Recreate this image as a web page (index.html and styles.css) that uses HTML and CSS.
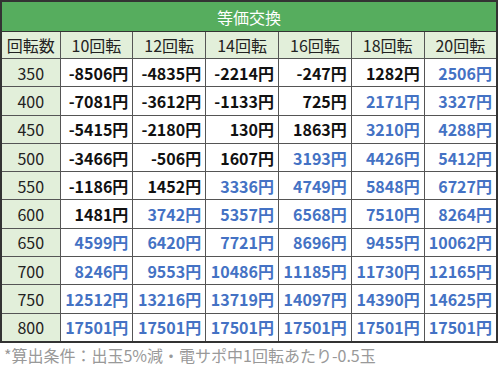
FILE: index.html
```html
<!DOCTYPE html>
<html lang="ja">
<head>
<meta charset="utf-8">
<link rel="stylesheet" href="styles.css">
</head>
<body>
<table class="tbl">
  <colgroup>
    <col class="c0"><col class="cn"><col class="cn"><col class="cn"><col class="cn"><col class="cn"><col class="cn">
  </colgroup>
  <tr class="title"><th colspan="7">等価交換</th></tr>
  <tr class="head"><th>回転数</th><th>10回転</th><th>12回転</th><th>14回転</th><th>16回転</th><th>18回転</th><th>20回転</th></tr>
  <tr><th>350</th><td>-8506円</td><td>-4835円</td><td>-2214円</td><td>-247円</td><td>1282円</td><td class="p">2506円</td></tr>
  <tr><th>400</th><td>-7081円</td><td>-3612円</td><td>-1133円</td><td>725円</td><td class="p">2171円</td><td class="p">3327円</td></tr>
  <tr><th>450</th><td>-5415円</td><td>-2180円</td><td>130円</td><td>1863円</td><td class="p">3210円</td><td class="p">4288円</td></tr>
  <tr><th>500</th><td>-3466円</td><td>-506円</td><td>1607円</td><td class="p">3193円</td><td class="p">4426円</td><td class="p">5412円</td></tr>
  <tr><th>550</th><td>-1186円</td><td>1452円</td><td class="p">3336円</td><td class="p">4749円</td><td class="p">5848円</td><td class="p">6727円</td></tr>
  <tr><th>600</th><td>1481円</td><td class="p">3742円</td><td class="p">5357円</td><td class="p">6568円</td><td class="p">7510円</td><td class="p">8264円</td></tr>
  <tr><th>650</th><td class="p">4599円</td><td class="p">6420円</td><td class="p">7721円</td><td class="p">8696円</td><td class="p">9455円</td><td class="p">10062円</td></tr>
  <tr><th>700</th><td class="p">8246円</td><td class="p">9553円</td><td class="p">10486円</td><td class="p">11185円</td><td class="p">11730円</td><td class="p">12165円</td></tr>
  <tr><th>750</th><td class="p">12512円</td><td class="p">13216円</td><td class="p">13719円</td><td class="p">14097円</td><td class="p">14390円</td><td class="p">14625円</td></tr>
  <tr><th>800</th><td class="p">17501円</td><td class="p">17501円</td><td class="p">17501円</td><td class="p">17501円</td><td class="p">17501円</td><td class="p">17501円</td></tr>
</table>
<p class="note">*算出条件：出玉5%減・電サポ中1回転あたり-0.5玉</p>
</body>
</html>
```
FILE: styles.css
```css
html, body {
  margin: 0;
  padding: 0;
  background: #fff;
}
body {
  font-family: "Noto Sans CJK JP", "Noto Sans", sans-serif;
  color: #1a1a1a;
}
.tbl {
  border-collapse: collapse;
  width: 498px;
  table-layout: fixed;
  border: 2px solid #333;
}
.c0 { width: 59px; }
.tbl th, .tbl td {
  border: 1px solid #555;
  padding: 0 4px;
  font-size: 16px;
  line-height: 20px;
  white-space: nowrap;
  overflow: hidden;
}
.title th {
  background: #56ad5e;
  color: #fff;
  font-weight: normal;
  height: 29px;
  padding: 0;
  text-align: center;
  border-bottom: 1px solid #333;
}
.head th {
  background: #e2efda;
  font-weight: normal;
  height: 26px;
  text-align: center;
  color: #222;
}
.tbl tr th:first-child {
  padding: 0;
}
.tbl tr:not(.title):not(.head) th {
  background: #e2efda;
  font-weight: normal;
  text-align: center;
  color: #222;
}
.tbl td {
  height: 27.3px;
  text-align: right;
  font-weight: bold;
  color: #111;
  background: #fff;
  padding-right: 4px;
}
.tbl td.p {
  color: #4472c4;
}
.note {
  margin: 2px 0 0 4px;
  font-size: 16px;
  line-height: 20px;
  color: #999;
}
```
